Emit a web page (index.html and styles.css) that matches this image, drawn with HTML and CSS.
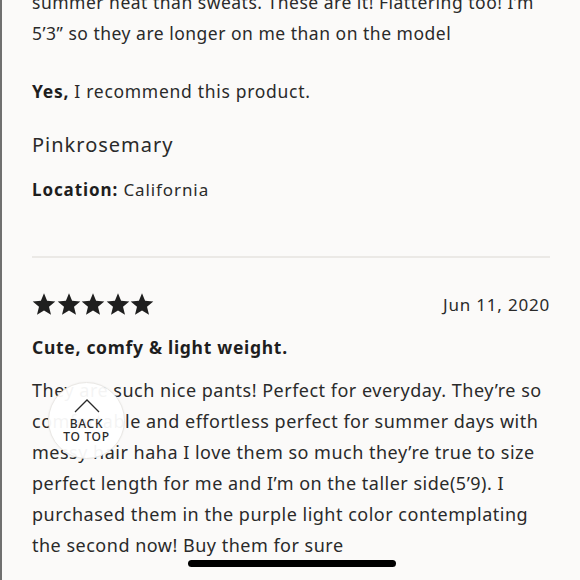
FILE: index.html
```html
<!DOCTYPE html>
<html>
<head>
<meta charset="utf-8">
<link rel="stylesheet" href="styles.css">
</head>
<body>
<div class="page">
  <section class="review review-prev">
    <p class="body-text first">summer heat than sweats. These are it! Flattering too! I’m 5’3” so they are longer on me than on the model</p>
    <p class="recommend"><b>Yes,</b> I recommend this product.</p>
    <p class="author">Pinkrosemary</p>
    <p class="location"><b>Location:</b> California</p>
  </section>
  <hr class="divider">
  <section class="review">
    <div class="review-head">
      <div class="stars">
        <svg viewBox="0 0 24 24" class="star"><path d="M12 1.2l3.1 7.6 8.2.6-6.3 5.3 2 8L12 18.4l-7 4.3 2-8L.7 9.4l8.2-.6z"/></svg>
        <svg viewBox="0 0 24 24" class="star"><path d="M12 1.2l3.1 7.6 8.2.6-6.3 5.3 2 8L12 18.4l-7 4.3 2-8L.7 9.4l8.2-.6z"/></svg>
        <svg viewBox="0 0 24 24" class="star"><path d="M12 1.2l3.1 7.6 8.2.6-6.3 5.3 2 8L12 18.4l-7 4.3 2-8L.7 9.4l8.2-.6z"/></svg>
        <svg viewBox="0 0 24 24" class="star"><path d="M12 1.2l3.1 7.6 8.2.6-6.3 5.3 2 8L12 18.4l-7 4.3 2-8L.7 9.4l8.2-.6z"/></svg>
        <svg viewBox="0 0 24 24" class="star"><path d="M12 1.2l3.1 7.6 8.2.6-6.3 5.3 2 8L12 18.4l-7 4.3 2-8L.7 9.4l8.2-.6z"/></svg>
      </div>
      <span class="date">Jun 11, 2020</span>
    </div>
    <h3 class="title">Cute, comfy &amp; light weight.</h3>
    <p class="body-text">They are such nice pants! Perfect for everyday. They’re so comfortable and effortless perfect for summer days with messy hair haha I love them so much they’re true to size perfect length for me and I’m on the taller side(5’9). I purchased them in the purple light color contemplating the second now! Buy them for sure</p>
  </section>
</div>
<a class="back-top" href="#">
  <svg class="chev" viewBox="0 0 26 14"><polyline points="1,13 13,1 25,13"/></svg>
  <span>BACK</span>
  <span>TO TOP</span>
</a>
<div class="home-bar"></div>
</body>
</html>
```
FILE: styles.css
```css
html, body {
  margin: 0;
  padding: 0;
  height: 100%;
  overflow: hidden;
}
body {
  background: #fbfaf9;
  border-left: 2px solid #707070;
  box-sizing: border-box;
  font-family: "Noto Sans", "Liberation Sans", sans-serif;
  color: #222;
  position: relative;
}
.page {
  padding: 0 30px 0 30px;
}
p, h3 { margin: 0; }
.body-text {
  font-size: 18px;
  line-height: 31px;
  letter-spacing: 0.5px;
  color: #2a2a2a;
}
.first { margin-top: -13px; }
.review-prev .first { font-size: 17.5px; }
.recommend {
  margin-top: 27px;
  font-size: 17.5px;
  line-height: 31px;
  letter-spacing: 0.7px;
  color: #2a2a2a;
}
.recommend b, .location b { font-weight: 700; color: #1e1e1e; }
.author {
  margin-top: 22px;
  font-size: 20px;
  line-height: 31px;
  letter-spacing: 1px;
  color: #2a2a2a;
}
.location {
  margin-top: 14px;
  font-size: 17px;
  line-height: 31px;
  letter-spacing: 0.9px;
  color: #2a2a2a;
}
.divider {
  border: 0;
  border-top: 2px solid #ebe9e6;
  margin: 51px 0 0 0;
}
.review-head {
  margin-top: 33px;
  display: flex;
  justify-content: space-between;
  align-items: center;
  height: 26px;
}
.stars { display: flex; gap: 0.5px; }
.star { width: 24px; height: 24px; fill: #1f1f1f; }
.date {
  font-size: 17px;
  letter-spacing: 0.8px;
  color: #2a2a2a;
}
.title {
  margin-top: 15px;
  font-size: 17.5px;
  line-height: 31px;
  letter-spacing: 0.7px;
  font-weight: 700;
  color: #1e1e1e;
}
.review .title + .body-text { margin-top: 12px; }
.back-top {
  position: absolute;
  left: 46px;
  top: 382px;
  width: 77px;
  height: 77px;
  border-radius: 50%;
  background: rgba(255,255,255,0.95);
  border: 1px solid #e9e7e4;
  box-shadow: 0 0 2px rgba(0,0,0,0.06);
  display: flex;
  flex-direction: column;
  align-items: center;
  text-decoration: none;
  color: #2a2a2a;
  font-family: "Noto Sans", sans-serif;
  font-size: 12px;
  font-weight: 500;
  line-height: 13px;
  letter-spacing: 0.7px;
  box-sizing: border-box;
  padding-top: 16px;
}
.chev { width: 26px; height: 14px; fill: none; stroke: #2a2a2a; stroke-width: 1.3; margin-bottom: 4px; }
.home-bar {
  position: absolute;
  left: 186px;
  top: 560px;
  width: 208px;
  height: 7px;
  border-radius: 4px;
  background: #000;
}
```
